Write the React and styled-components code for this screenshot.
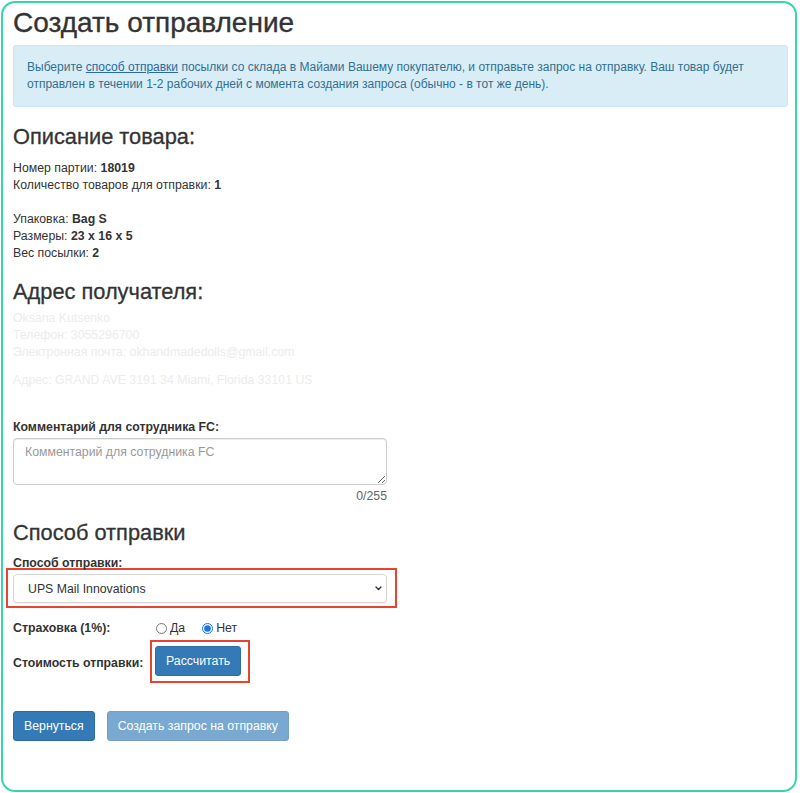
import React from "react";
import styled, { createGlobalStyle } from "styled-components";

const GlobalStyle = createGlobalStyle`
  html, body { margin: 0; padding: 0; background: #fff; }
  body { font-family: "Liberation Sans", Arial, sans-serif; font-size: 12.3px; line-height: 17px; color: #333; }
  * { box-sizing: border-box; }
`;

const Frame = styled.div`
  width: 796px;
  height: 791px;
  margin: 1px 0 0 1px;
  border: 2px solid #33d6ae;
  border-radius: 14px;
  padding: 5px 7px 0 10px;
  overflow: hidden;
`;

const Title = styled.h2`
  font-size: 28px;
  line-height: 29px;
  font-weight: 400;
  -webkit-text-stroke: 0.35px #333;
  margin: 0 0 8px;
  color: #333;
`;

const Alert = styled.div`
  background: #d9edf7;
  border: 1px solid #c9e6f2;
  border-radius: 3px;
  color: #31708f;
  padding: 13px 13px;
  font-size: 12px;
  line-height: 17px;
`;

const AlertLink = styled.a`
  color: #2a6aa0;
  text-decoration: underline;
`;

const SectionTitle = styled.h3`
  font-size: 21.8px;
  line-height: 23px;
  font-weight: 400;
  -webkit-text-stroke: 0.3px #333;
  color: #333;
  margin: ${(p) => p.$m};
`;

const InfoBlock = styled.div`
  line-height: 17px;
`;

const InfoLine = styled.div`
  min-height: 17px;
`;

const FaintBlock = styled.div`
  color: #ececec;
  line-height: 17px;
`;

const FaintLine = styled.div`
  margin-top: ${(p) => p.$mt || 0}px;
`;

const FieldLabel = styled.label`
  display: block;
  font-weight: bold;
  margin-top: ${(p) => p.$mt || 0}px;
  margin-bottom: ${(p) => p.$mb || 0}px;
`;

const TextArea = styled.textarea`
  display: block;
  width: 374px;
  height: 47px;
  border: 1px solid #ccc;
  border-radius: 4px;
  padding: 5px 11px;
  font-family: "Liberation Sans", Arial, sans-serif;
  font-size: 12.3px;
  line-height: 17px;
  color: #555;
  box-shadow: inset 0 1px 1px rgba(0, 0, 0, 0.075);
  &::placeholder { color: #999; }
`;

const Counter = styled.div`
  width: 374px;
  text-align: right;
  color: #666;
  margin-top: 3px;
`;

const Highlight = styled.div`
  display: ${(p) => (p.$inline ? "inline-block" : "block")};
  width: ${(p) => p.$w || "auto"};
  border: 2px solid #e8432e;
  padding: ${(p) => p.$pad};
  margin: ${(p) => p.$m};
`;

const SelectWrap = styled.div`
  position: relative;
  width: 374px;
`;

const Select = styled.select`
  display: block;
  width: 374px;
  height: 29px;
  border: 1px solid #d6d6d6;
  border-radius: 4px;
  background: #fff;
  padding: 0 14px;
  font-family: "Liberation Sans", Arial, sans-serif;
  font-size: 12.3px;
  color: #333;
  appearance: none;
  -webkit-appearance: none;
  box-shadow: 0 1px 1px rgba(0, 0, 0, 0.06);
`;

const Chevron = styled.svg`
  position: absolute;
  right: 5px;
  top: 12px;
  pointer-events: none;
`;

const FormRow = styled.div`
  display: grid;
  grid-template-columns: 142px auto;
  align-items: ${(p) => p.$align || "center"};
  margin-top: ${(p) => p.$mt || 0}px;
`;

const RowLabel = styled.div`
  font-weight: bold;
  padding-top: ${(p) => p.$pt || 0}px;
`;

const Radios = styled.div`
  display: flex;
  align-items: center;
`;

const RadioOption = styled.label`
  display: flex;
  align-items: center;
  margin-right: 16px;
`;

const Radio = styled.input`
  width: 11px;
  height: 11px;
  margin: 0 3px 0 1px;
  accent-color: #1a73e8;
`;

const Button = styled.button`
  font-family: "Liberation Sans", Arial, sans-serif;
  font-size: 12.3px;
  line-height: 18px;
  padding: 5px 10px;
  border: 1px solid #2e6da4;
  border-radius: 3px;
  background: #337ab7;
  color: #fff;
  opacity: ${(p) => (p.disabled ? 0.65 : 1)};
  cursor: ${(p) => (p.disabled ? "not-allowed" : "pointer")};
  display: block;
`;

const Actions = styled.div`
  display: flex;
  gap: 12px;
  margin-top: 28px;
`;

export default function App() {
  return (
    <>
      <GlobalStyle />
      <Frame>
        <Title>Создать отправление</Title>
        <Alert>
          Выберите <AlertLink href="#">способ отправки</AlertLink> посылки со склада в Майами Вашему покупателю, и отправьте запрос на отправку. Ваш товар будет
          <br />
          отправлен в течении 1-2 рабочих дней с момента создания запроса (обычно - в тот же день).
        </Alert>

        <SectionTitle $m="18px 0 12px">Описание товара:</SectionTitle>
        <InfoBlock>
          <InfoLine>Номер партии: <b>18019</b></InfoLine>
          <InfoLine>Количество товаров для отправки: <b>1</b></InfoLine>
          <InfoLine />
          <InfoLine>Упаковка: <b>Bag S</b></InfoLine>
          <InfoLine>Размеры: <b>23 x 16 x 5</b></InfoLine>
          <InfoLine>Вес посылки: <b>2</b></InfoLine>
        </InfoBlock>

        <SectionTitle $m="18px 0 7px">Адрес получателя:</SectionTitle>
        <FaintBlock>
          <FaintLine>Oksana Kutsenko</FaintLine>
          <FaintLine>Телефон: 3055296700</FaintLine>
          <FaintLine>Электронная почта: okhandmadedolls@gmail.com</FaintLine>
          <FaintLine $mt={11}>Адрес: GRAND AVE 3191 34 Miami, Florida 33101 US</FaintLine>
        </FaintBlock>

        <FieldLabel $mt={30} $mb={2}>Комментарий для сотрудника FC:</FieldLabel>
        <TextArea placeholder="Комментарий для сотрудника FC" />
        <Counter>0/255</Counter>

        <SectionTitle $m="16px 0 11px">Способ отправки</SectionTitle>
        <FieldLabel>Способ отправки:</FieldLabel>
        <Highlight $w="391px" $pad="4px 8px 3px 5px" $m="-4px 0 0 -7px">
          <SelectWrap>
            <Select defaultValue="ups">
              <option value="ups">UPS Mail Innovations</option>
            </Select>
            <Chevron width="7" height="5" viewBox="0 0 7 5">
              <path d="M1 1 L3.5 3.5 L6 1" fill="none" stroke="#333" strokeWidth="1.4" strokeLinecap="round" strokeLinejoin="round" />
            </Chevron>
          </SelectWrap>
        </Highlight>

        <FormRow $mt={12}>
          <RowLabel>Страховка (1%):</RowLabel>
          <Radios>
            <RadioOption>
              <Radio type="radio" name="ins" value="yes" />
              Да
            </RadioOption>
            <RadioOption>
              <Radio type="radio" name="ins" value="no" defaultChecked />
              Нет
            </RadioOption>
          </Radios>
        </FormRow>

        <FormRow $mt={3} $align="start">
          <RowLabel $pt={15}>Стоимость отправки:</RowLabel>
          <div>
            <Highlight $inline $pad="4px 7px 5px 3px" $m="0 0 0 -5px">
              <Button type="button">Рассчитать</Button>
            </Highlight>
          </div>
        </FormRow>

        <Actions>
          <Button type="button">Вернуться</Button>
          <Button type="button" disabled>Создать запрос на отправку</Button>
        </Actions>
      </Frame>
    </>
  );
}
